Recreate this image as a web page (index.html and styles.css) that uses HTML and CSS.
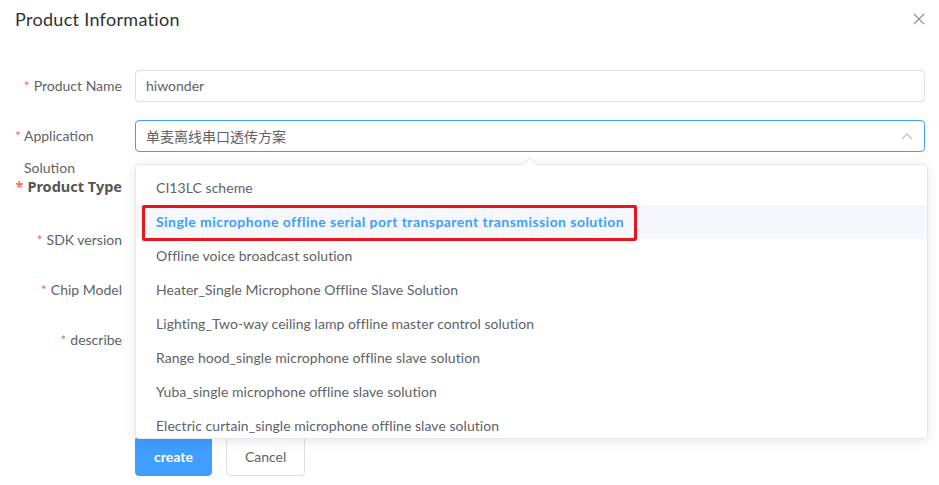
FILE: index.html
```html
<!DOCTYPE html>
<html>
<head>
<meta charset="utf-8">
<link rel="stylesheet" href="styles.css">
</head>
<body>
<div class="dialog">
  <div class="dialog-header">
    <span class="dialog-title">Product Information</span>
    <button class="close" aria-label="Close">
      <svg width="12" height="12" viewBox="0 0 12 12"><path d="M1 1 L11 11 M11 1 L1 11" stroke="#909399" stroke-width="1.2" fill="none"/></svg>
    </button>
  </div>
  <div class="dialog-body">
    <form class="form">
      <div class="form-item">
        <label class="label req">Product Name</label>
        <div class="content"><div class="input">hiwonder</div></div>
      </div>
      <div class="form-item">
        <label class="label label-left req">Application Solution</label>
        <div class="content">
          <div class="input input-focus cjk">单麦离线串口透传方案
            <svg class="arrow" width="12" height="8" viewBox="0 0 12 8"><path d="M1 7 L6 2 L11 7" stroke="#c0c4cc" stroke-width="1.3" fill="none"/></svg>
          </div>
        </div>
      </div>
      <div class="form-item item-type">
        <label class="label label-bold req">Product Type</label>
        <div class="content"><div class="input"></div></div>
      </div>
      <div class="form-item">
        <label class="label req">SDK version</label>
        <div class="content"><div class="input"></div></div>
      </div>
      <div class="form-item">
        <label class="label req">Chip Model</label>
        <div class="content"><div class="input"></div></div>
      </div>
      <div class="form-item item-desc">
        <label class="label req">describe</label>
        <div class="content"><div class="textarea"></div></div>
      </div>
      <div class="form-item">
        <div class="label"></div>
        <div class="content buttons">
          <button type="button" class="btn btn-primary">create</button>
          <button type="button" class="btn">Cancel</button>
        </div>
      </div>
    </form>
  </div>

  <div class="dropdown">
    <span class="caret"></span>
    <ul class="options">
      <li class="option">CI13LC scheme</li>
      <li class="option option-selected">Single microphone offline serial port transparent transmission solution</li>
      <li class="option">Offline voice broadcast solution</li>
      <li class="option">Heater_Single Microphone Offline Slave Solution</li>
      <li class="option">Lighting_Two-way ceiling lamp offline master control solution</li>
      <li class="option">Range hood_single microphone offline slave solution</li>
      <li class="option">Yuba_single microphone offline slave solution</li>
      <li class="option">Electric curtain_single microphone offline slave solution</li>
    </ul>
  </div>
  <div class="highlight-box"></div>
</div>
</body>
</html>
```

FILE: styles.css
```css
* { box-sizing: border-box; }
html, body {
  margin: 0;
  padding: 0;
  background: #fff;
}
body {
  font-family: "Lato", "Noto Sans CJK SC", sans-serif;
  font-size: 14px;
  color: #606266;
}
.dialog {
  position: relative;
  width: 939px;
  height: 485px;
  overflow: hidden;
}
.dialog-header {
  display: flex;
  justify-content: space-between;
  align-items: center;
  height: 37px;
  padding: 0 14px 0 15px;
}
.dialog-title {
  font-size: 18px;
  letter-spacing: 0.3px;
  color: #303133;
  font-family: "Lato", "Noto Sans CJK SC", sans-serif;
}
.close {
  border: 0;
  background: none;
  padding: 0;
  display: flex;
  width: 12px;
  height: 12px;
}
.dialog-body {
  padding: 33px 14px 0 15px;
}
.form-item {
  display: flex;
  margin-bottom: 18px;
}
.label {
  width: 120px;
  flex: none;
  height: 32px;
  line-height: 32px;
  text-align: right;
  padding-right: 13px;
  white-space: normal;
}
.req::before {
  content: "*";
  color: #f56c6c;
  margin-right: 4px;
}
.label-left {
  text-align: left;
  padding-left: 9px;
  padding-right: 20px;
}
.label-left::before {
  margin-left: -9px;
  margin-right: 3px;
}
.label-bold {
  font-family: "Noto Sans", sans-serif;
  font-weight: bold;
  font-size: 14.5px;
  color: #555;
  padding-right: 13px;
  white-space: nowrap;
}
.label-bold::before { margin-right: 4px; }
.item-type { min-height: 36px; }
.content {
  flex: 1;
  display: flex;
}
.input {
  position: relative;
  width: 100%;
  height: 32px;
  line-height: 30px;
  border: 1px solid #dcdfe6;
  border-radius: 4px;
  padding: 0 10px;
  color: #606266;
}
.cjk { font-family: "Noto Sans CJK SC", sans-serif; }
.input-focus { border-color: #409eff; }
.arrow {
  position: absolute;
  right: 11px;
  top: 11px;
}
.textarea {
  width: 100%;
  height: 94px;
  border: 1px solid #dcdfe6;
  border-radius: 4px;
}
.buttons {
  gap: 14px;
}
.btn {
  height: 40px;
  padding: 0 18px;
  border: 1px solid #dcdfe6;
  background: #fff;
  border-radius: 4px;
  font-family: "Lato", sans-serif;
  font-size: 14px;
  color: #606266;
}
.btn-primary {
  background: #409eff;
  border-color: #409eff;
  color: #fff;
  font-weight: bold;
}
.dropdown {
  position: absolute;
  left: 135px;
  top: 164px;
  width: 793px;
  height: 275px;
  background: #fff;
  border: 1px solid #e4e7ed;
  border-radius: 4px;
  box-shadow: 0 2px 12px rgba(0, 0, 0, 0.1);
}
.caret {
  position: absolute;
  left: 389px;
  top: -6px;
  width: 10px;
  height: 10px;
  background: #fff;
  border-left: 1px solid #e4e7ed;
  border-top: 1px solid #e4e7ed;
  transform: rotate(45deg);
}
.options {
  list-style: none;
  margin: 0;
  padding: 6px 0;
  height: 100%;
  overflow: hidden;
}
.option {
  height: 34px;
  line-height: 34px;
  padding: 0 20px;
  white-space: nowrap;
  color: #606266;
  letter-spacing: 0.05px;
}
.option-selected {
  background: #f5f7fa;
  color: #409eff;
  font-weight: bold;
  letter-spacing: 0.45px;
}
.highlight-box {
  position: absolute;
  left: 142px;
  top: 205px;
  width: 495px;
  height: 36px;
  border: 3px solid #e8141e;
  border-radius: 2px;
}
```
